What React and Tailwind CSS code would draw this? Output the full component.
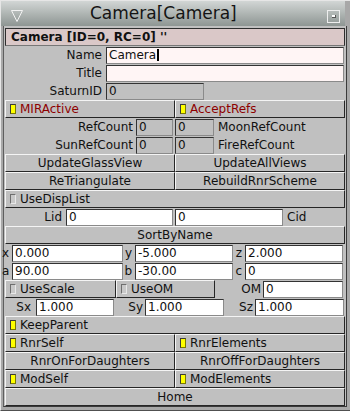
import React from 'react';

const FONT = { fontFamily: '"DejaVu Sans", Verdana, sans-serif' };

function Ind({ on }) {
  return on ? (
    <span className="ml-[4px] mr-[4px] w-[6px] h-[10px] shrink-0 bg-[#ffff00] border-l border-t border-[#3a3a3a] border-r border-b border-r-[#7a7a00] border-b-[#7a7a00]" />
  ) : (
    <span className="ml-[4px] mr-[4px] w-[6px] h-[10px] shrink-0 bg-[#c8c8c8] border border-[#6e6e6e] border-r-[#e8e8e8] border-b-[#e8e8e8]" />
  );
}

function Btn({ w, ind, red, center, children }) {
  return (
    <div
      className={`${w} h-[18px] shrink-0 flex items-center bg-[#c0c0c0] border border-t-[#f4f4f4] border-l-[#f4f4f4] border-b-[#262626] border-r-[#262626] ${
        center ? 'justify-center' : ''
      } ${red ? 'text-[#8e0000]' : 'text-[#111]'}`}
    >
      {ind !== undefined && <Ind on={ind} />}
      <span className="whitespace-nowrap">{children}</span>
    </div>
  );
}

function Field({ w, gray, pink, children }) {
  return (
    <div
      className={`${w} h-[17px] shrink-0 flex items-center pl-[2px] border border-[#333] border-r-[#8a8a8a] border-b-[#8a8a8a] text-[#111] ${
        gray ? 'bg-[#c0c0c0]' : pink ? 'bg-[#fff5f5]' : 'bg-white'
      }`}
    >
      {children}
    </div>
  );
}

function Label({ w, children, pr = 'pr-[3px]', left }) {
  return (
    <div className={`${w} h-[18px] shrink-0 flex items-center ${left ? 'justify-start pl-[4px]' : `justify-end ${pr}`} text-[#111] whitespace-nowrap`}>
      {children}
    </div>
  );
}

const Row = ({ children }) => <div className="h-[18px] w-[340px] flex items-center">{children}</div>;

export default function App() {
  return (
    <div
      style={FONT}
      className="w-[350px] h-[411px] bg-[#a8a8a8] border-t border-l border-[#e6e6e6] border-b border-b-[#505050] flex flex-col text-[12px] leading-none"
    >
      {/* title bar */}
      <div className="h-[25px] mr-[5px] shrink-0 flex items-center bg-gradient-to-b from-[#d2d6d5] to-[#8e9693] relative">
        <svg className="absolute left-[10px] top-[9px]" width="13" height="12" viewBox="0 0 13 12" fill="none" stroke="#f2f2f2" strokeWidth="1">
          <path d="M0.5 0.5h11L6 11.5z" />
        </svg>
        <span className="pl-[89px] text-[17px] text-[#141414] whitespace-nowrap">Camera[Camera]</span>
        <span className="absolute left-[326px] top-[9px] w-[13px] h-[13px] border border-[#eeeeee] flex items-center justify-center">
          <span className="w-[4px] h-[3px] bg-white border-b border-r border-[#555]" />
        </span>
      </div>

      {/* body */}
      <div className="ml-[2px] w-[344px] h-[381px] shrink-0 bg-[#c0c0c0] border-l border-r border-b border-l-[#5e5e5e] border-r-[#3a3a3a] border-b-[#3a3a3a] pt-[2px] pl-[1px] flex flex-col">
        <div className="h-[18px] w-[340px] flex items-center pl-[5px] bg-[#dac8c8] border border-[#2e2e2e] border-b-[#777] font-bold text-[#111]">
          Camera [ID=0, RC=0] ''
        </div>

        <Row>
          <Label w="w-[101px]" pr="pr-[4px]">Name</Label>
          <Field w="w-[238px]" pink>
            Camera<span className="w-[2px] h-[12px] bg-black ml-[1px]" />
          </Field>
        </Row>
        <Row>
          <Label w="w-[101px]" pr="pr-[4px]">Title</Label>
          <Field w="w-[238px]" pink />
        </Row>
        <Row>
          <Label w="w-[101px]" pr="pr-[4px]">SaturnID</Label>
          <Field w="w-[98px]" gray>0</Field>
        </Row>

        <Row>
          <Btn w="w-[170px]" ind red>MIRActive</Btn>
          <Btn w="w-[170px]" ind red>AcceptRefs</Btn>
        </Row>

        <Row>
          <Label w="w-[131px]">RefCount</Label>
          <Field w="w-[37px]" gray>0</Field>
          <div className="w-[2px]" />
          <Field w="w-[39px]" gray>0</Field>
          <Label w="w-[120px]" left>MoonRefCount</Label>
        </Row>
        <Row>
          <Label w="w-[131px]">SunRefCount</Label>
          <Field w="w-[37px]" gray>0</Field>
          <div className="w-[2px]" />
          <Field w="w-[39px]" gray>0</Field>
          <Label w="w-[120px]" left>FireRefCount</Label>
        </Row>

        <Row>
          <Btn w="w-[170px]" center>UpdateGlassView</Btn>
          <Btn w="w-[170px]" center>UpdateAllViews</Btn>
        </Row>
        <Row>
          <Btn w="w-[170px]" center>ReTriangulate</Btn>
          <Btn w="w-[170px]" center>RebuildRnrScheme</Btn>
        </Row>
        <Row>
          <Btn w="w-[340px]" ind={false}>UseDispList</Btn>
        </Row>

        <Row>
          <Label w="w-[61px]" pr="pr-[4px]">Lid</Label>
          <Field w="w-[107px]">0</Field>
          <div className="w-[2px]" />
          <Field w="w-[108px]">0</Field>
          <Label w="w-[60px]" left>Cid</Label>
        </Row>

        <Row>
          <Btn w="w-[340px]" center>SortByName</Btn>
        </Row>

        <Row>
          <div className="-ml-[4px] w-[11px] h-[18px] flex items-center pl-[1px] text-[#111]">x</div>
          <Field w="w-[111px]">0.000</Field>
          <Label w="w-[12px]" pr="pr-[3px]">y</Label>
          <Field w="w-[98px]">-5.000</Field>
          <Label w="w-[12px]" pr="pr-[3px]">z</Label>
          <Field w="w-[98px]">2.000</Field>
        </Row>
        <Row>
          <div className="-ml-[4px] w-[11px] h-[18px] flex items-center pl-[1px] text-[#111]">a</div>
          <Field w="w-[111px]">90.00</Field>
          <Label w="w-[12px]" pr="pr-[3px]">b</Label>
          <Field w="w-[98px]">-30.00</Field>
          <Label w="w-[12px]" pr="pr-[3px]">c</Label>
          <Field w="w-[98px]">0</Field>
        </Row>

        <Row>
          <Btn w="w-[111px]" ind={false}>UseScale</Btn>
          <Btn w="w-[99px]" ind={false}>UseOM</Btn>
          <Label w="w-[48px]" pr="pr-[2px]">OM</Label>
          <Field w="w-[80px]">0</Field>
        </Row>
        <Row>
          <Label w="w-[31px]" pr="pr-[5px]">Sx</Label>
          <Field w="w-[78px]">1.000</Field>
          <Label w="w-[31px]" pr="pr-[2px]">Sy</Label>
          <Field w="w-[79px]">1.000</Field>
          <Label w="w-[31px]" pr="pr-[2px]">Sz</Label>
          <Field w="w-[89px]">1.000</Field>
        </Row>

        <Row>
          <Btn w="w-[340px]" ind>KeepParent</Btn>
        </Row>
        <Row>
          <Btn w="w-[170px]" ind>RnrSelf</Btn>
          <Btn w="w-[170px]" ind>RnrElements</Btn>
        </Row>
        <Row>
          <Btn w="w-[170px]" center>RnrOnForDaughters</Btn>
          <Btn w="w-[170px]" center>RnrOffForDaughters</Btn>
        </Row>
        <Row>
          <Btn w="w-[170px]" ind>ModSelf</Btn>
          <Btn w="w-[170px]" ind>ModElements</Btn>
        </Row>
        <Row>
          <Btn w="w-[340px]" center>Home</Btn>
        </Row>
      </div>
    </div>
  );
}
